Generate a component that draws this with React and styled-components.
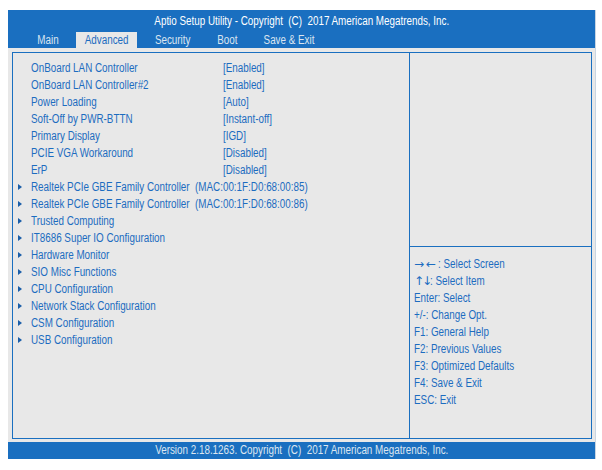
import React from 'react';
import styled, { createGlobalStyle } from 'styled-components';

// Page reset and the BIOS font
const GlobalStyle = createGlobalStyle`
  html, body {
    margin: 0;
    padding: 0;
    background: #ffffff;
  }
  body {
    font-family: 'Liberation Sans', Arial, sans-serif;
    font-size: 12px;
  }
`;

const BLUE = '#1a6fc0';
const GREY = '#e8e8e8';
const TEXT = '#1c6cc0';

// The screen font is a narrow sans, so squeeze the glyphs horizontally
const Narrow = styled.span`
  display: inline-block;
  white-space: pre;
  transform: scaleX(0.82);
  transform-origin: ${p => p.$origin || 'left center'};
`;

// Arrow keys in the help text
const Glyphs = styled.span`
  font-family: 'DejaVu Sans', sans-serif;
  font-size: 12px;
  letter-spacing: ${p => p.$spacing}px;
`;

// Outer window of the setup utility
const Frame = styled.div`
  margin: 10px 0 0 8px;
  width: 587px;
  background: ${GREY};
  box-shadow: 1px 0 0 #c9d5e2;
`;

const Header = styled.div`
  background: ${BLUE};
  height: 38px;
  display: flex;
  flex-direction: column;
`;

const Title = styled.div`
  height: 22px;
  line-height: 22px;
  text-align: center;
  color: #ffffff;
`;

const TabRow = styled.div`
  display: flex;
  gap: 9px;
  padding-left: 21px;
  height: 16px;
`;

const Tab = styled.div`
  width: ${p => p.$width}px;
  text-align: center;
  line-height: 17px;
  color: ${p => (p.$active ? TEXT : '#dbe5f0')};
  background: ${p => (p.$active ? GREY : 'transparent')};
`;

// Main bordered panel with settings and help columns
const Panel = styled.div`
  margin: 4px 3px 0 4px;
  height: 385px;
  border: 1px solid ${BLUE};
  display: grid;
  grid-template-columns: 396px 1fr;
`;

const SettingsList = styled.div`
  padding-top: 6px;
`;

const Row = styled.div`
  display: flex;
  align-items: center;
  height: 17px;
  padding-left: 5px;
  color: ${TEXT};
`;

const Marker = styled.span`
  width: 13px;
  flex: none;
  display: flex;
  align-items: center;
`;

const Arrow = styled.span`
  width: 0;
  height: 0;
  border-top: 3px solid transparent;
  border-bottom: 3px solid transparent;
  border-left: 4px solid #1a5ea8;
`;

const Label = styled.span`
  width: ${p => (p.$wide ? 'auto' : '192px')};
  flex: none;
`;

const Value = styled.span``;

const SidePanel = styled.div`
  border-left: 1px solid ${BLUE};
  display: flex;
  flex-direction: column;
`;

const Description = styled.div`
  height: 193px;
  border-bottom: 1px solid ${BLUE};
`;

const HelpList = styled.div`
  padding: 9px 0 0 4px;
`;

const HelpLine = styled.div`
  display: flex;
  align-items: center;
  height: 17px;
  line-height: 17px;
  color: ${TEXT};
`;

const Footer = styled.div`
  margin-top: 3px;
  height: 17px;
  line-height: 17px;
  background: ${BLUE};
  color: #dce6f0;
  text-align: center;
`;

const tabs = [
  { name: 'Main', width: 38 },
  { name: 'Advanced', width: 61 },
  { name: 'Security', width: 53 },
  { name: 'Boot', width: 38 },
  { name: 'Save & Exit', width: 69 },
];

const settings = [
  { label: 'OnBoard LAN Controller', value: '[Enabled]' },
  { label: 'OnBoard LAN Controller#2', value: '[Enabled]' },
  { label: 'Power Loading', value: '[Auto]' },
  { label: 'Soft-Off by PWR-BTTN', value: '[Instant-off]' },
  { label: 'Primary Display', value: '[IGD]' },
  { label: 'PCIE VGA Workaround', value: '[Disabled]' },
  { label: 'ErP', value: '[Disabled]' },
  { label: 'Realtek PCIe GBE Family Controller  (MAC:00:1F:D0:68:00:85)', sub: true },
  { label: 'Realtek PCIe GBE Family Controller  (MAC:00:1F:D0:68:00:86)', sub: true },
  { label: 'Trusted Computing', sub: true },
  { label: 'IT8686 Super IO Configuration', sub: true },
  { label: 'Hardware Monitor', sub: true },
  { label: 'SIO Misc Functions', sub: true },
  { label: 'CPU Configuration', sub: true },
  { label: 'Network Stack Configuration', sub: true },
  { label: 'CSM Configuration', sub: true },
  { label: 'USB Configuration', sub: true },
];

const help = [
  { keys: '\u2192\u2190', spacing: 2, text: ': Select Screen' },
  { keys: '\u2191\u2193', spacing: -2, text: ': Select Item' },
  { text: 'Enter: Select' },
  { text: '+/-: Change Opt.' },
  { text: 'F1: General Help' },
  { text: 'F2: Previous Values' },
  { text: 'F3: Optimized Defaults' },
  { text: 'F4: Save & Exit' },
  { text: 'ESC: Exit' },
];

const App = () => (
  <>
    <GlobalStyle />
    <Frame>
      <Header>
        <Title>
          <Narrow $origin="center">Aptio Setup Utility - Copyright  (C)  2017 American Megatrends, Inc.</Narrow>
        </Title>
        <TabRow>
          {tabs.map(t => (
            <Tab key={t.name} $width={t.width} $active={t.name === 'Advanced'}>
              <Narrow $origin="center">{t.name}</Narrow>
            </Tab>
          ))}
        </TabRow>
      </Header>
      <Panel>
        <SettingsList>
          {settings.map(s => (
            <Row key={s.label}>
              <Marker>{s.sub && <Arrow />}</Marker>
              <Label $wide={s.sub}>
                <Narrow>{s.label}</Narrow>
              </Label>
              {s.value && (
                <Value>
                  <Narrow>{s.value}</Narrow>
                </Value>
              )}
            </Row>
          ))}
        </SettingsList>
        <SidePanel>
          <Description />
          <HelpList>
            {help.map(h => (
              <HelpLine key={h.text}>
                {h.keys && <Glyphs $spacing={h.spacing}>{h.keys}</Glyphs>}
                <Narrow>{h.text}</Narrow>
              </HelpLine>
            ))}
          </HelpList>
        </SidePanel>
      </Panel>
      <Footer>
        <Narrow $origin="center">Version 2.18.1263. Copyright  (C)  2017 American Megatrends, Inc.</Narrow>
      </Footer>
    </Frame>
  </>
);

export default App;
